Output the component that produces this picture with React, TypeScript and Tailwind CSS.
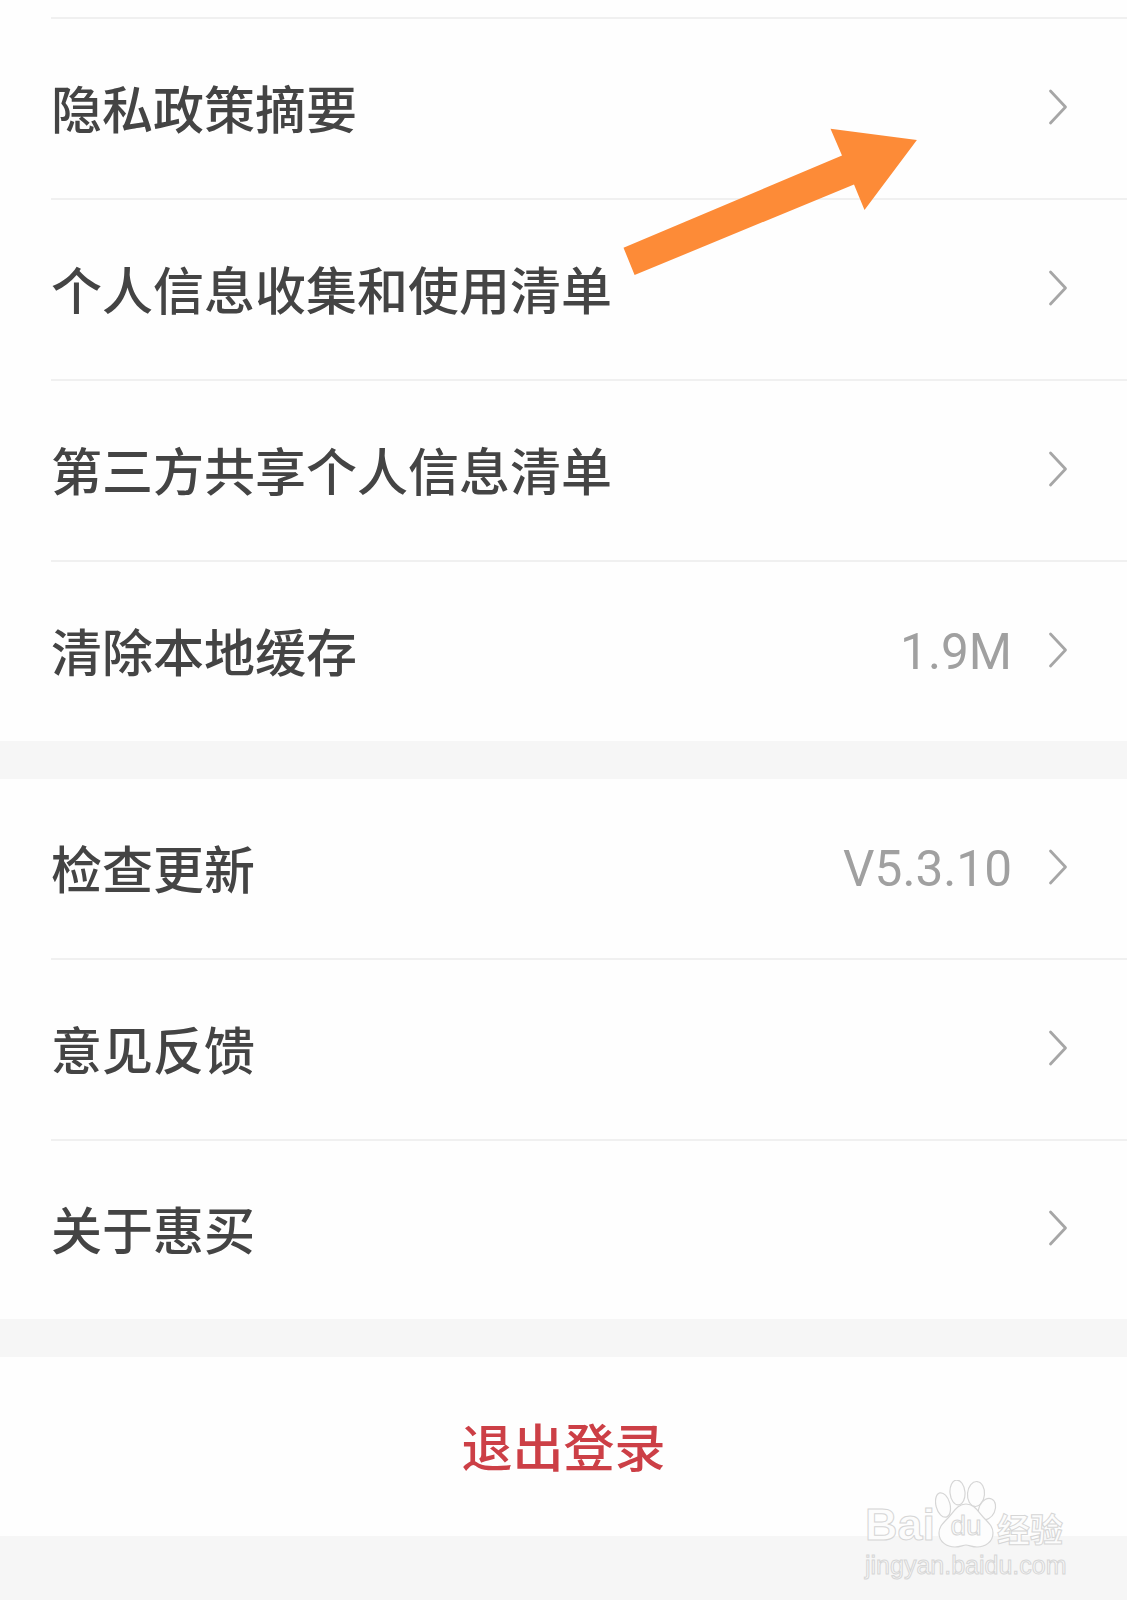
const font = "font-['Noto_Sans_CJK_SC','Noto_Sans',sans-serif]";

function Chevron() {
  return (
    <svg width="20" height="36" viewBox="0 0 20 36" fill="none" stroke="#a6a6a6" strokeWidth={2.8} strokeLinecap="round" strokeLinejoin="round">
      <path d="M2.5 2l15 16-15 16" />
    </svg>
  );
}

function Row({ label, value, className = 'h-[181px] border-b-2 border-[#f0f0f0]' }: { label: string; value?: string; className?: string }) {
  return (
    <div className="pl-[51px] bg-[#fefefe]">
      <div className={`flex items-center justify-between pr-[59px] ${className}`}>
        <span className="pb-[3px] text-[51px] leading-none font-medium text-[#444444]">{label}</span>
        <div className="flex items-center gap-[36px] -mt-[4px]">
          {value && <span className="pt-[7px] font-['Roboto',sans-serif] text-[49.5px] leading-none text-[#a0a0a0]">{value}</span>}
          <Chevron />
        </div>
      </div>
    </div>
  );
}

function Arrow() {
  return (
    <svg className="absolute left-[620px] top-[125px]" width="300" height="155" viewBox="620 125 300 155">
      <polygon points="623.5,247.7 842,155.5 830.5,128.7 916.9,140 864.5,210 854,184.5 634.6,275" fill="#fd8b37" />
    </svg>
  );
}

function Watermark() {
  const outline = 'text-[#fcfcfc] [-webkit-text-stroke:1px_#d6d6d6]';
  return (
    <div className="absolute left-[865px] top-[1480px] flex flex-col gap-[5px] font-['Liberation_Sans',sans-serif]">
      <div className="flex items-end">
        <span className={`text-[45px] leading-none font-bold mb-[1px] ${outline}`}>Bai</span>
        <div className="relative w-[62px] h-[68px] flex items-end justify-center">
          <svg className="absolute inset-0" width="62" height="68" viewBox="0 0 62 68" fill="#fdfdfd" stroke="#d6d6d6" strokeWidth={1.2}>
            <ellipse cx="8" cy="25" rx="7" ry="12.5" transform="rotate(-15 8 25)" />
            <ellipse cx="22.5" cy="12.5" rx="7.5" ry="12.5" transform="rotate(-5 22.5 12.5)" />
            <ellipse cx="41" cy="14" rx="8.5" ry="12.5" transform="rotate(5 41 14)" />
            <ellipse cx="52" cy="29" rx="8" ry="11" transform="rotate(25 52 29)" />
            <path d="M31 24c9 0 12 8 18 14 7 7 9 10 9 15 0 9-8 14-16 14-5 0-8-2-11-2s-6 2-11 2C12 67 4 62 4 53c0-5 2-8 9-15 6-6 9-14 18-14z" />
          </svg>
          <span className={`relative text-[28px] leading-none mb-[8px] ${outline}`}>du</span>
        </div>
        <span className={`text-[33px] leading-none font-bold mb-[3px] ${font} ${outline}`}>经验</span>
      </div>
      <span className="text-[25px] leading-none text-[#f8f8f8] [-webkit-text-stroke:1px_#d6d6d6]">jingyan.baidu.com</span>
    </div>
  );
}

export default function App() {
  return (
    <div className={`relative h-[1600px] w-[1127px] overflow-hidden bg-[#f6f6f6] ${font}`}>
      <div className="pl-[51px] bg-[#fefefe]">
        <div className="h-[19px] border-b-2 border-[#f0f0f0]" />
      </div>
      <Row label="隐私政策摘要" />
      <Row label="个人信息收集和使用清单" />
      <Row label="第三方共享个人信息清单" />
      <Row label="清除本地缓存" value="1.9M" className="h-[179px]" />

      <div className="h-[38px]" />
      <Row label="检查更新" value="V5.3.10" />
      <Row label="意见反馈" />
      <Row label="关于惠买" className="h-[178px]" />

      <div className="h-[38px]" />
      <div className="h-[179px] bg-[#fefefe] flex items-center justify-center">
        <span className="pb-[3px] text-[51px] leading-none font-medium text-[#cc3f46]">退出登录</span>
      </div>

      <Arrow />
      <Watermark />
    </div>
  );
}
